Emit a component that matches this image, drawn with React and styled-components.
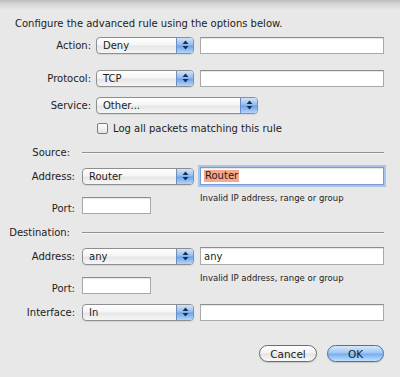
import React from 'react';
import styled, { createGlobalStyle } from 'styled-components';

const Global = createGlobalStyle`
  html, body { margin: 0; padding: 0; background: #e8e8e8; }
  body { font-family: "DejaVu Sans", "Liberation Sans", sans-serif; color: #1c1c1c; }
`;

const Sheet = styled.div`
  width: 400px;
  height: 377px;
  overflow: hidden;
  background: #e8e8e8;
  display: flex;
  flex-direction: column;
  font-size: 10px;
`;

const Shade = styled.div`
  height: 10px;
  flex: none;
  background: linear-gradient(#bdbdbd, #d6d6d6 40%, #e8e8e8);
`;

const Title = styled.div`
  margin: 7px 0 0 15px;
  height: 14px;
  line-height: 14px;
`;

const Row = styled.div`
  display: flex;
  align-items: ${p => p.$top ? 'flex-start' : 'center'};
  height: ${p => p.$h || 18}px;
  margin-top: ${p => p.$mt || 0}px;
  padding-right: 16px;
`;

const Label = styled.div`
  width: ${p => p.$w}px;
  flex: none;
  text-align: right;
  padding-right: ${p => p.$pad || 5}px;
  box-sizing: border-box;
  white-space: nowrap;
`;

const Select = styled.div`
  width: ${p => p.$w}px;
  height: 17px;
  flex: none;
  box-sizing: border-box;
  display: flex;
  border: 1px solid #8e8e8e;
  border-radius: 4px;
  overflow: hidden;
  background: linear-gradient(#ffffff, #f5f5f5 45%, #e6e6e6 55%, #f6f6f6);
  box-shadow: 0 1px 1px rgba(0,0,0,0.08);
`;

const SelectText = styled.div`
  flex: 1;
  padding-left: 6px;
  line-height: 15px;
`;

const Cap = styled.div`
  width: 16px;
  flex: none;
  border-left: 1px solid #6d8fbd;
  background: linear-gradient(#d3e4f8, #8fbaf0 48%, #6aa2ea 52%, #b4d6fb);
  display: flex;
  align-items: center;
  justify-content: center;
`;

const Field = styled.div`
  width: ${p => p.$w}px;
  height: ${p => p.$h || 17}px;
  flex: none;
  margin-left: ${p => p.$ml || 0}px;
  margin-top: ${p => p.$mt || 0}px;
  box-sizing: border-box;
  background: #fff;
  border: 1px solid #a9a9a9;
  border-top-color: #8c8c8c;
  box-shadow: inset 0 1px 1px rgba(0,0,0,0.1);
  padding-left: 3px;
  line-height: 15px;
  display: flex;
  align-items: center;
`;

const FocusField = styled(Field)`
  border: 1px solid #7b9ccf;
  box-shadow: 0 0 0 2px #a9c5ec, inset 0 1px 1px rgba(0,0,0,0.1);
`;

const Highlight = styled.span`
  background: #f5a88e;
  padding: 0 1px;
  line-height: 12px;
`;

const Hint = styled.div`
  margin-left: ${p => p.$ml}px;
  font-size: 8.5px;
  line-height: 12px;
  white-space: nowrap;
`;

const Check = styled.div`
  width: 11px;
  height: 11px;
  box-sizing: border-box;
  margin-left: 97px;
  border: 1px solid #7a7a7a;
  border-radius: 2px;
  background: linear-gradient(#fdfdfd, #e4e4e4);
`;

const CheckLabel = styled.div`
  margin-left: 5px;
`;

const Rule = styled.div`
  flex: 1;
  height: 1px;
  margin-left: 7px;
  background: #8f8f8f;
  box-shadow: 0 1px 0 #f6f6f6;
`;

const ButtonBar = styled.div`
  display: flex;
  justify-content: flex-end;
  gap: 10px;
  margin-top: 24px;
  padding-right: 16px;
`;

const Pill = styled.div`
  width: ${p => p.$w}px;
  height: 17px;
  box-sizing: border-box;
  border-radius: 9px;
  border: 1px solid ${p => p.$primary ? '#4b6fa8' : '#6c6c6c'};
  background: ${p => p.$primary
    ? 'linear-gradient(#d6e8fb, #9cc6f3 48%, #74acef 52%, #c2e0fd)'
    : 'linear-gradient(#ffffff, #f2f2f2 48%, #e2e2e2 52%, #fafafa)'};
  display: flex;
  align-items: center;
  justify-content: center;
  font-size: 10.5px;
  box-shadow: 0 1px 1px rgba(0,0,0,0.15);
`;

const Arrows = () => (
  <svg width="7" height="10" viewBox="0 0 7 10">
    <path d="M3.5 0.5 L6.5 4 L0.5 4 Z" fill="#1f2f4a" />
    <path d="M3.5 9.5 L6.5 6 L0.5 6 Z" fill="#1f2f4a" />
  </svg>
);

const PopUp = ({ w, children }) => (
  <Select $w={w}>
    <SelectText>{children}</SelectText>
    <Cap><Arrows /></Cap>
  </Select>
);

export default function App() {
  return (
    <Sheet>
      <Global />
      <Shade />
      <Title>Configure the advanced rule using the options below.</Title>

      <Row $mt={5}>
        <Label $w={96}>Action:</Label>
        <PopUp w={98}>Deny</PopUp>
        <Field $w={184} $ml={6} />
      </Row>

      <Row $mt={15}>
        <Label $w={96}>Protocol:</Label>
        <PopUp w={98}>TCP</PopUp>
        <Field $w={184} $ml={6} />
      </Row>

      <Row $mt={9}>
        <Label $w={96}>Service:</Label>
        <PopUp w={162}>Other...</PopUp>
      </Row>

      <Row $mt={6} $h={16}>
        <Check />
        <CheckLabel>Log all packets matching this rule</CheckLabel>
      </Row>

      <Row $mt={8} $h={16}>
        <Label $w={75} $pad={0}>Source:</Label>
        <Rule />
      </Row>

      <Row $mt={7}>
        <Label $w={82} $pad={7}>Address:</Label>
        <PopUp w={112}>Router</PopUp>
        <FocusField $w={184} $ml={6} $h={18}><Highlight>Router</Highlight></FocusField>
      </Row>

      <Row $mt={7} $h={22} $top>
        <Label $w={82} $pad={7} style={{ lineHeight: '34px' }}>Port:</Label>
        <Field $w={69} $mt={5} />
        <Hint $ml={49}>Invalid IP address, range or group</Hint>
      </Row>

      <Row $mt={10} $h={16}>
        <Label $w={75} $pad={0}>Destination:</Label>
        <Rule />
      </Row>

      <Row $mt={7}>
        <Label $w={82} $pad={7}>Address:</Label>
        <PopUp w={112}>any</PopUp>
        <Field $w={184} $ml={6} $h={18}>any</Field>
      </Row>

      <Row $mt={7} $h={22} $top>
        <Label $w={82} $pad={7} style={{ lineHeight: '34px' }}>Port:</Label>
        <Field $w={69} $mt={5} />
        <Hint $ml={49}>Invalid IP address, range or group</Hint>
      </Row>

      <Row $mt={9}>
        <Label $w={82} $pad={7}>Interface:</Label>
        <PopUp w={112}>In</PopUp>
        <Field $w={184} $ml={6} />
      </Row>

      <ButtonBar>
        <Pill $w={58}>Cancel</Pill>
        <Pill $w={57} $primary>OK</Pill>
      </ButtonBar>
    </Sheet>
  );
}
